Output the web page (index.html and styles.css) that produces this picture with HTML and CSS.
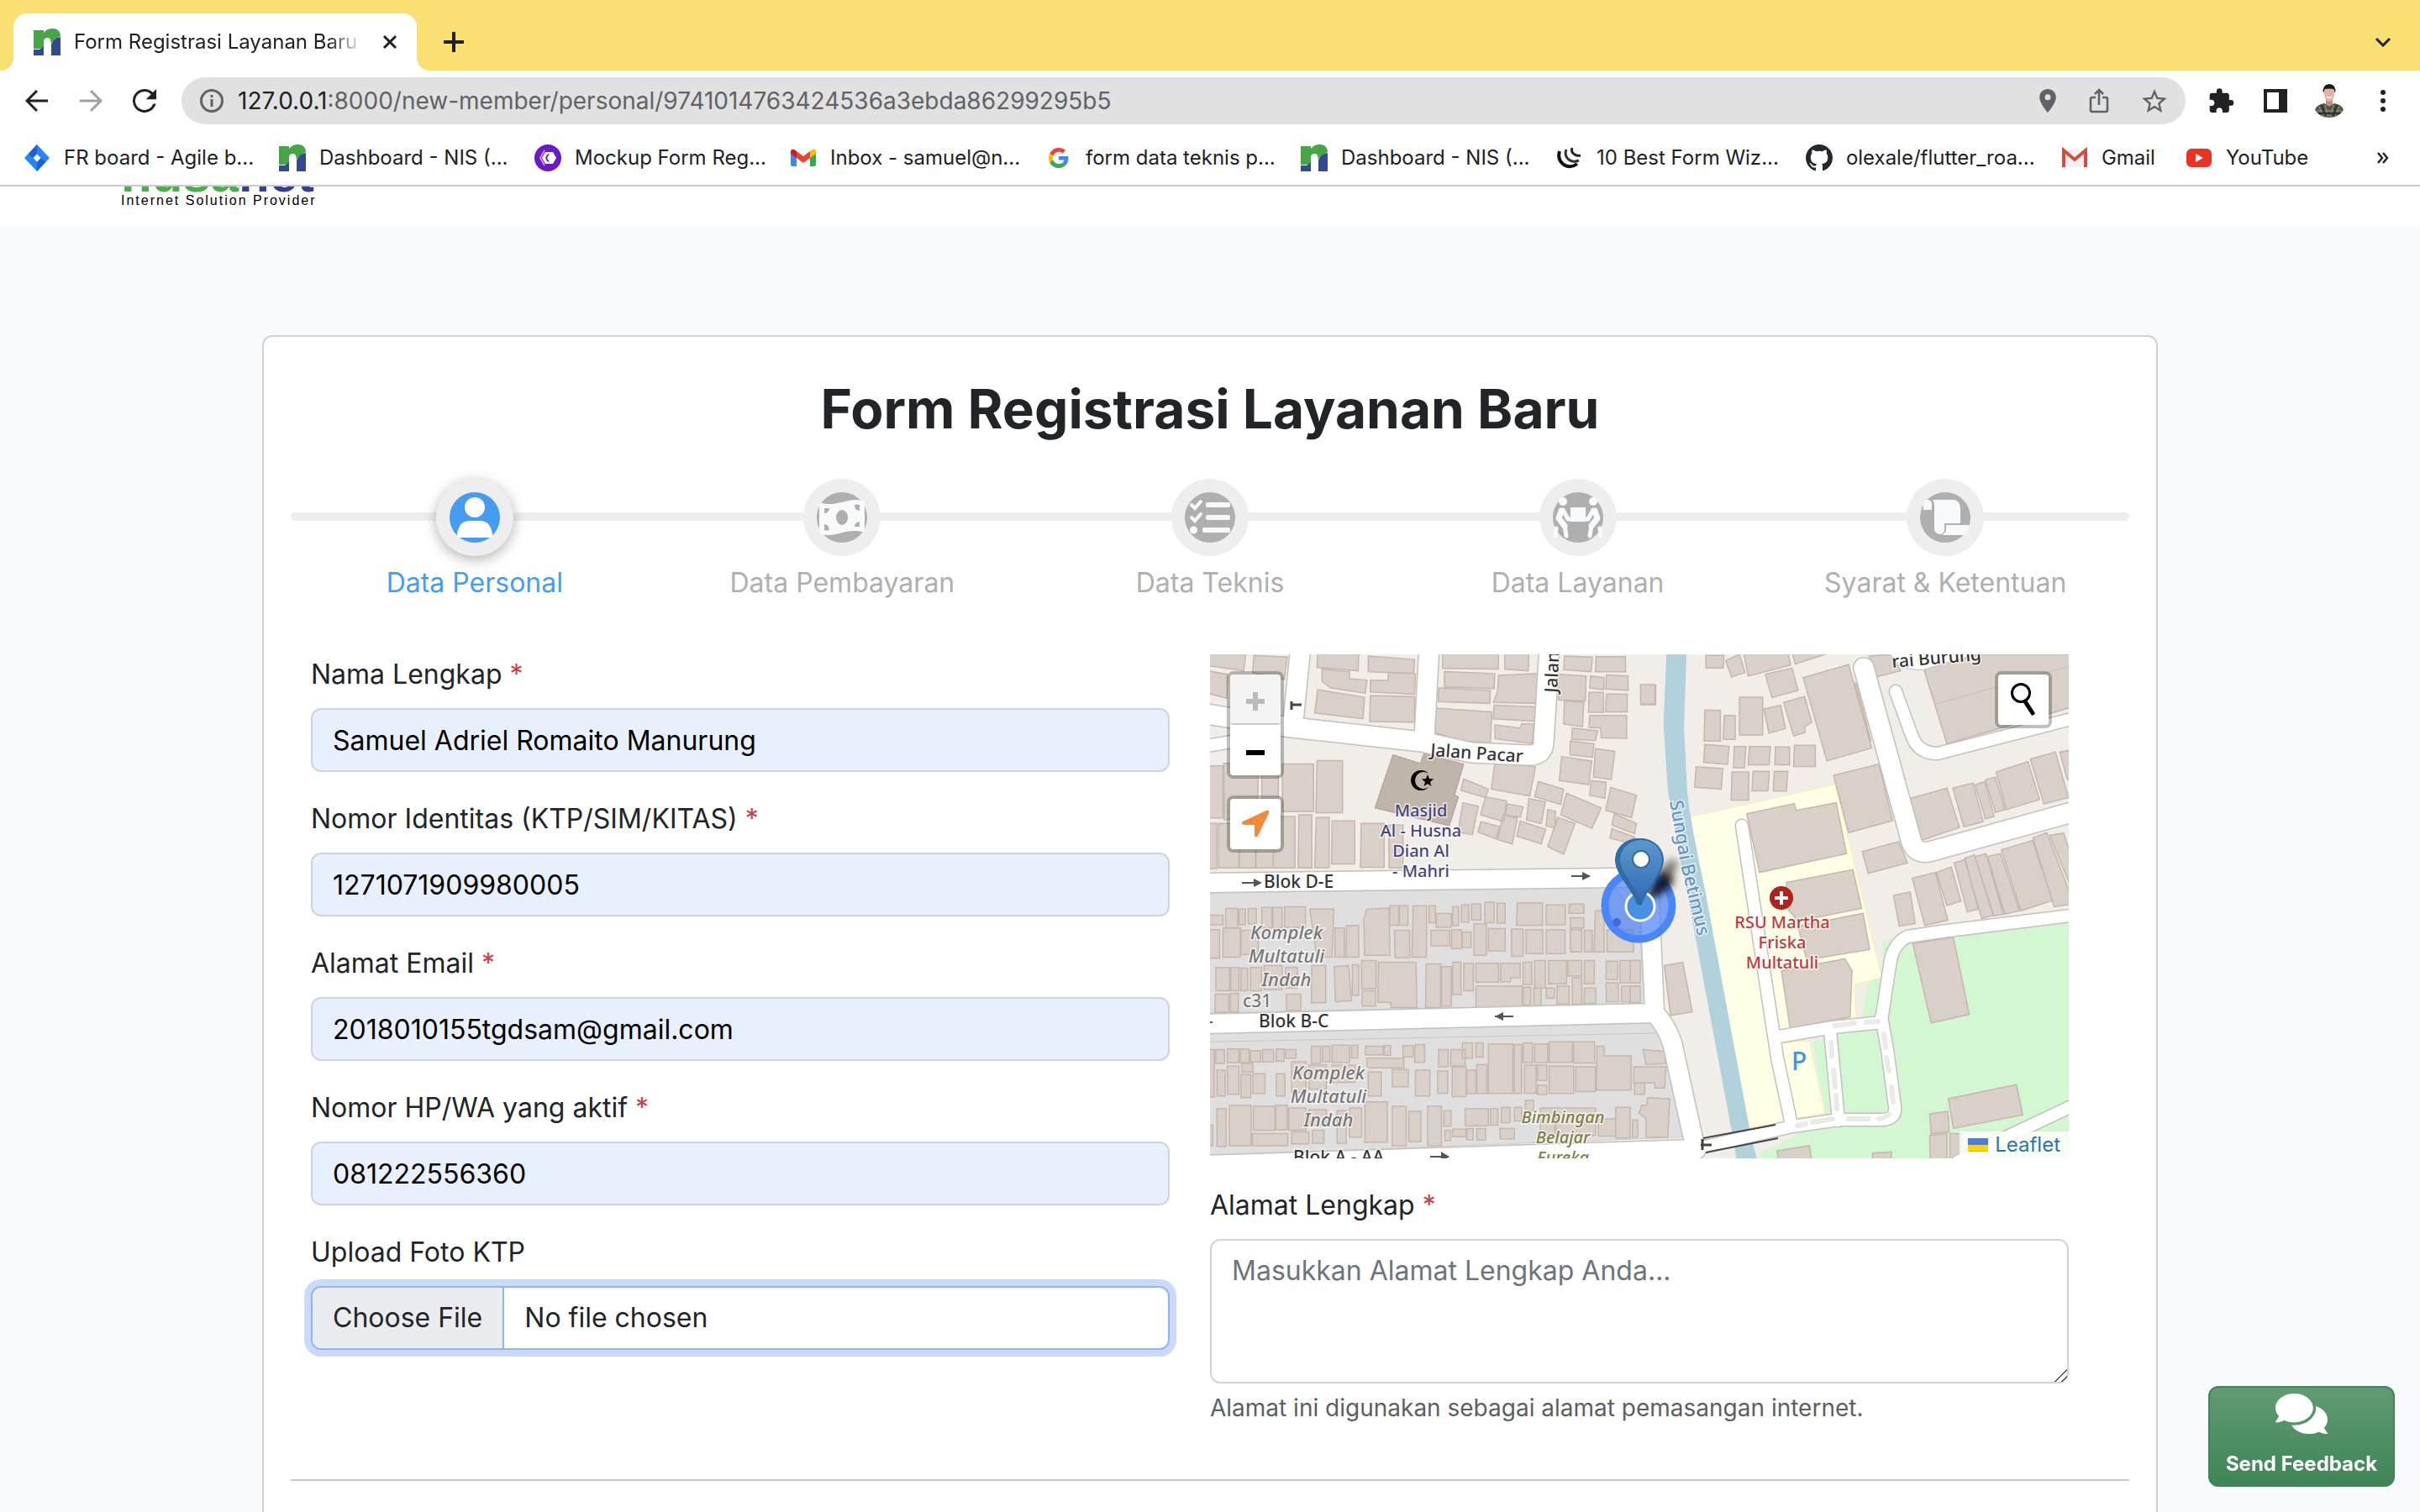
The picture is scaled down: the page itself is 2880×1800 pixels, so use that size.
FILE: index.html
```html
<!DOCTYPE html>
<html lang="id">
<head>
<meta charset="utf-8">
<title>Form Registrasi Layanan Baru</title>
<link rel="stylesheet" href="styles.css">
</head>
<body>
<svg class="defs" aria-hidden="true">
  <symbol id="nis" viewBox="0 0 32 32">
    <path fill="#48a546" d="M0 2h12v3c3-4 7-5 11-5 6 0 9 4 9 9l-8 5c-2 1-3 3-3 5l-1-6c-1-3-8-3-8 2v7L8 24H0z"/>
    <path fill="#334a90" d="M0 25h7l5-4v11H0zM21 32V19c2-6 6-8 11-9v22z"/>
  </symbol>
</svg>
<div class="browser">
  <header class="tabstrip">
    <div class="tab">
      <svg class="fav" viewBox="0 0 32 32"><use href="#nis"/></svg>
      <span class="tab-title">Form Registrasi Layanan Baru -</span>
      <button class="icon-btn" aria-label="Close tab"><svg width="18" height="18" viewBox="0 0 18 18"><path d="M2 2l14 14M16 2L2 16" stroke="#202124" stroke-width="3" fill="none"/></svg></button>
    </div>
    <button class="icon-btn new-tab" aria-label="New tab"><svg width="24" height="24" viewBox="0 0 24 24"><path d="M12 1v22M1 12h22" stroke="#202124" stroke-width="4" stroke-linecap="round"/></svg></button>
    <button class="icon-btn tab-search" aria-label="Search tabs"><svg width="20" height="12" viewBox="0 0 20 12"><path d="M2 2l8 8 8-8" stroke="#202124" stroke-width="3" fill="none"/></svg></button>
  </header>
  <nav class="toolbar">
    <button class="icon-btn" aria-label="Back"><svg width="28" height="28" viewBox="0 0 28 28"><path d="M27 14H3M14 2L2 14l12 12" stroke="#202124" stroke-width="3" fill="none"/></svg></button>
    <button class="icon-btn" aria-label="Forward"><svg width="28" height="28" viewBox="0 0 28 28"><path d="M1 14h24M14 2l12 12-12 12" stroke="#a0a1a3" stroke-width="3" fill="none"/></svg></button>
    <button class="icon-btn" aria-label="Reload"><svg width="28" height="28" viewBox="4 4 16 16"><path fill="#202124" d="M17.650 6.350A7.960 7.960 0 0 0 12 4a8 8 0 1 0 7.730 10h-1.800A6.300 6.300 0 1 1 12 5.700c1.730 0 3.300.7 4.450 1.850L13 11h7V4z"/></svg></button>
    <div class="omnibox">
      <svg width="28" height="28" viewBox="0 0 28 28"><circle cx="14" cy="14" r="12.500" fill="none" stroke="#5f6368" stroke-width="3"/><path d="M14 12v9M14 7v3" stroke="#5f6368" stroke-width="3"/></svg>
      <span class="url">127.0.0.1<span class="url-path">:8000/new-member/personal/9741014763424536a3ebda86299295b5</span></span>
      <div class="omni-icons">
        <svg width="20" height="28" viewBox="5 2 14 20"><path fill="#5f6368" d="M12 2C8.130 2 5 5.130 5 9c0 5.250 7 13 7 13s7-7.750 7-13c0-3.870-3.130-7-7-7zm0 9.500a2.500 2.500 0 1 1 0-5 2.500 2.500 0 0 1 0 5z"/></svg>
        <svg width="24" height="30" viewBox="0 0 24 30"><path d="M8 11H4q-2 0-2 2v13q0 2 2 2h16q2 0 2-2V13q0-2-2-2h-4M12 20V3M7 7l5-5 5 5" stroke="#5f6368" stroke-width="2.600" fill="none"/></svg>
        <svg width="30" height="28" viewBox="2 2 20 19"><path fill="#5f6368" d="M22 9.240l-7.190-.62L12 2 9.190 8.630 2 9.240l5.460 4.730L5.820 21 12 17.270 18.180 21l-1.630-7.030zM12 15.400l-3.760 2.270 1-4.280-3.320-2.880 4.380-.38L12 6.100l1.710 4.040 4.380.38-3.320 2.880 1 4.280z"/></svg>
      </div>
    </div>
    <button class="icon-btn" aria-label="Extensions"><svg width="30" height="30" viewBox="1.500 1 22 21.500"><path fill="#202124" d="M20.500 11H19V7c0-1.100-.9-2-2-2h-4V3.500a2.500 2.500 0 0 0-5 0V5H4c-1.100 0-2 .9-2 2v3.800h1.500c1.500 0 2.700 1.200 2.700 2.700S5 16.200 3.500 16.200H2V20c0 1.100.9 2 2 2h3.800v-1.500c0-1.500 1.200-2.700 2.700-2.700s2.700 1.200 2.700 2.700V22H17c1.100 0 2-.9 2-2v-4h1.500a2.500 2.500 0 0 0 0-5z"/></svg></button>
    <button class="icon-btn" aria-label="Side panel"><svg width="28" height="28" viewBox="0 0 28 28"><path fill="#202124" fill-rule="evenodd" d="M0 0h28v28H0zM4 4v20h14V4z"/></svg></button>
    <button class="icon-btn" aria-label="Profile"><svg width="34" height="40" viewBox="0 0 34 40"><path fill="#55564e" d="M0 31q1-6 11-8l6 3 6-3q10 2 11 8-6 9-17 9T0 31z"/><path d="M5 27l5 11M12 25l4 14M22 25l-4 14M29 27l-5 11M2 32h30" stroke="#a39c62" stroke-width="1" fill="none"/><path d="M8 25l4 12M26 25l-4 13M4 35h26" stroke="#2c2f43" stroke-width="2" fill="none"/><path fill="#c98e7b" d="M13 17h8v7l-4 3-4-3z"/><ellipse cx="17" cy="12" rx="6" ry="9" fill="#e2b3a2"/><path fill="#1c191b" d="M10 11Q8 1 17 0q9 1 7 11l-2-5q-5-1-10 0z"/><path d="M14 15q3 3 6 0" stroke="#fff" stroke-width="1.500" fill="none"/></svg></button>
    <button class="icon-btn" aria-label="Menu"><svg width="6" height="28" viewBox="0 0 6 28"><g fill="#202124"><circle cx="3" cy="4" r="3"/><circle cx="3" cy="14" r="3"/><circle cx="3" cy="24" r="3"/></g></svg></button>
  </nav>
  <nav class="bookmarks">
    <a href="#" class="bm"><svg class="fav" viewBox="0 0 32 32"><path fill="#2684ff" d="M16 0l15 16-15 16L1 16z"/><path fill="#1f5fd0" d="M16 0v10l-5 6-5-5zM16 32V22l5-6 5 5z"/><path fill="#fff" d="M16 11.500l4.500 4.500-4.500 4.500-4.500-4.500z"/></svg>FR board - Agile b...</a>
    <a href="#" class="bm"><svg class="fav" viewBox="0 0 32 32"><use href="#nis"/></svg>Dashboard - NIS (...</a>
    <a href="#" class="bm"><svg class="fav" viewBox="0 0 32 32"><circle cx="16" cy="16" r="16" fill="#6a1bc4"/><path fill="#fff" d="M13 9h9l4 7-4 7h-9l-4-7z"/><path d="M12 7l-5 9 5 9" stroke="#d9c2f3" stroke-width="1.500" fill="none"/><path fill="#6a1bc4" d="M15 12l3-1-3 5 3 5-3-1-2-4z"/></svg>Mockup Form Reg...</a>
    <a href="#" class="bm"><svg class="fav" viewBox="0 0 32 32"><path fill="#4285f4" d="M1 8v16q0 2 2 2h5V13z"/><path fill="#34a853" d="M31 8v16q0 2-2 2h-5V13z"/><path fill="#ea4335" d="M8 8l8 6 8-6v8l-8 6-8-6z"/><path fill="#c5221f" d="M1 9q0-4 4-3l3 2v8l-7-5z"/><path fill="#fbbc04" d="M31 9q0-4-4-3l-3 2v8l7-5z"/></svg>Inbox - samuel@n...</a>
    <a href="#" class="bm"><svg class="fav" viewBox="-8 -8 64 64"><path fill="#EA4335" d="M24 9.500c3.540 0 6.710 1.220 9.210 3.600l6.850-6.850C35.900 2.380 30.470 0 24 0 14.620 0 6.510 5.380 2.560 13.220l7.980 6.190C12.430 13.720 17.740 9.500 24 9.500z"/><path fill="#4285F4" d="M46.980 24.550c0-1.570-.15-3.090-.38-4.550H24v9.020h12.940c-.58 2.960-2.260 5.480-4.780 7.180l7.730 6c4.510-4.180 7.090-10.360 7.090-17.650z"/><path fill="#FBBC05" d="M10.530 28.590c-.48-1.450-.76-2.990-.76-4.590s.27-3.140.76-4.590l-7.980-6.190C.92 16.460 0 20.120 0 24s.92 7.540 2.560 10.780z"/><path fill="#34A853" d="M24 48c6.480 0 11.930-2.130 15.890-5.810l-7.730-6c-2.150 1.450-4.920 2.300-8.160 2.300-6.260 0-11.570-4.220-13.470-9.910l-7.980 6.190C6.510 42.620 14.620 48 24 48z"/></svg>form data teknis p...</a>
    <a href="#" class="bm"><svg class="fav" viewBox="0 0 32 32"><use href="#nis"/></svg>Dashboard - NIS (...</a>
    <a href="#" class="bm bm-auto"><svg class="fav" viewBox="0 0 32 32"><path fill="none" stroke="#111" stroke-width="4" d="M4 8q-3 10 5 16 8 5 16-1"/><path fill="none" stroke="#333" stroke-width="3" d="M12 6q-3 7 3 12 5 4 12 1"/><path fill="none" stroke="#222" stroke-width="3" d="M19 4q-2 5 3 8 3 2 7 1"/></svg>10 Best Form Wiz...</a>
    <a href="#" class="bm"><svg class="fav" viewBox="0 0 16 16"><path fill="#24292f" d="M8 0C3.580 0 0 3.580 0 8c0 3.540 2.290 6.530 5.470 7.590.4.070.55-.17.55-.38 0-.19-.01-.82-.01-1.490-2.010.37-2.530-.49-2.690-.94-.09-.23-.48-.94-.82-1.130-.28-.15-.68-.52-.01-.53.63-.01 1.080.58 1.230.82.72 1.210 1.870.87 2.330.66.070-.52.28-.87.51-1.070-1.780-.2-3.640-.89-3.640-3.950 0-.87.31-1.590.82-2.150-.08-.2-.36-1.020.08-2.120 0 0 .67-.21 2.200.82.64-.18 1.320-.27 2-.27s1.360.09 2 .27c1.530-1.040 2.200-.82 2.200-.82.44 1.100.16 1.920.08 2.120.51.56.82 1.270.82 2.150 0 3.070-1.870 3.750-3.650 3.950.29.25.54.73.54 1.480 0 1.070-.01 1.930-.01 2.200 0 .21.15.46.55.38A8.010 8.010 0 0 0 16 8c0-4.420-3.580-8-8-8z"/></svg>olexale/flutter_roa...</a>
    <a href="#" class="bm bm-short"><svg class="fav" viewBox="0 0 32 32"><path fill="#f1f1f1" d="M1 6h30v21H1z"/><path fill="none" stroke="#d54b3d" stroke-width="4" d="M3 27V7l13 11L29 7v20"/></svg>Gmail</a>
    <a href="#" class="bm bm-auto"><svg class="fav" viewBox="0 0 32 32"><rect x="1" y="5" width="30" height="22" rx="6" fill="#ea3323"/><path fill="#fff" d="M12 11l9 5-9 5z"/></svg>YouTube</a>
    <button class="icon-btn bm-more" aria-label="More bookmarks"><svg width="14" height="14" viewBox="0 0 14 14"><path d="M1 1l5 6-5 6M7 1l5 6-5 6" stroke="#202124" stroke-width="2.400" fill="none"/></svg></button>
  </nav>
  <div class="viewport">
    <div class="site-header">
      <div class="logo">
        <div class="logo-name"><span class="logo-green">nusa</span><span class="logo-blue">net</span></div>
        <div class="logo-tag">Internet Solution Provider</div>
      </div>
    </div>
    <main class="page">
      <form class="card">
        <h1>Form Registrasi Layanan Baru</h1>
        <ol class="steps">
          <li class="step active"><span class="dot"><svg width="60" height="60" viewBox="-30 -30 60 60"><circle r="30" fill="#469cf1"/><circle cy="-12" r="12" fill="#fff"/><path fill="#fff" d="M-21 24v-4Q-19 4-6 4H6Q19 4 21 20v4z"/></svg></span>Data Personal</li>
          <li class="step"><span class="dot"><svg width="60" height="60" viewBox="-30 -30 60 60"><circle r="30" fill="#afafaf"/><path fill="#f8f9fb" d="M-27-14q0-3 3-3C-9-13 4-21 17-21q6 0 10 2v33q0 3-3 3C9 13-4 21-17 21q-6 0-10-2z"/><g fill="#afafaf"><ellipse rx="7" ry="9"/><path d="M-21-11h6q-1 6-6 6zM15-15q3-1 6 0v7q-6 0-6-7zM-21 8q6 1 6 7-3 1-6 0zM21 5v6h-6q0-5 6-6z"/></g></svg></span>Data Pembayaran</li>
          <li class="step"><span class="dot"><svg width="60" height="60" viewBox="-30 -30 60 60"><circle r="30" fill="#afafaf"/><g stroke="#f8f9fb" fill="none" stroke-width="4" stroke-linecap="round"><path d="M-22-15l4 4 7-8M-22 0l4 4 7-8"/></g><g fill="#f8f9fb"><rect x="-5" y="-18" width="29" height="6" rx="2"/><rect x="-5" y="-3" width="29" height="6" rx="2"/><rect x="-9" y="12" width="33" height="6" rx="2"/><circle cx="-19.500" cy="15" r="4.500"/></g></svg></span>Data Teknis</li>
          <li class="step"><span class="dot"><svg width="60" height="60" viewBox="-30 -30 60 60"><circle r="30" fill="#afafaf"/><g fill="#f8f9fb"><circle cx="-18" cy="-19" r="5"/><circle cx="18" cy="-19" r="5"/><path d="M-9-12H9V5H-9z"/></g><g fill="none" stroke="#f8f9fb" stroke-linecap="round" stroke-linejoin="round"><path stroke-width="7" d="M-20-8l-3 9 7 9M20-8l3 9-7 9"/><path stroke-width="5" d="M-18-9l6 11h6M18-9L12 2H6M-16 9l2 13M16 9l-2 13M-26 13l-1 9M26 13l1 9"/></g></svg></span>Data Layanan</li>
          <li class="step"><span class="dot"><svg width="60" height="60" viewBox="-30 -30 60 60"><circle r="30" fill="#afafaf"/><g fill="#f8f9fb"><path d="M-26-15q0-6 5-6t5 6v6h-10zM-15-21H9q8 0 9 9V7H-1v8q-1 5-5 5-7-1-7-7v-27q0-4-2-7zM1 9h27q0 12-8 12H-4q5-3 5-7z"/></g></svg></span>Syarat &amp; Ketentuan</li>
        </ol>
        <div class="fields">
          <div class="col">
            <div class="field"><label for="nama">Nama Lengkap <span class="req">*</span></label><input id="nama" class="control filled" type="text" value="Samuel Adriel Romaito Manurung"></div>
            <div class="field"><label for="ktp">Nomor Identitas (KTP/SIM/KITAS) <span class="req">*</span></label><input id="ktp" class="control filled" type="text" value="1271071909980005"></div>
            <div class="field"><label for="email">Alamat Email <span class="req">*</span></label><input id="email" class="control filled" type="email" value="2018010155tgdsam@gmail.com"></div>
            <div class="field"><label for="hp">Nomor HP/WA yang aktif <span class="req">*</span></label><input id="hp" class="control filled" type="tel" value="081222556360"></div>
            <div class="field"><label for="foto">Upload Foto KTP</label><input id="foto" class="control file" type="file"></div>
          </div>
          <div class="col">
            <div class="map">
              <svg class="map-canvas" viewBox="0 0 1022 600" preserveAspectRatio="xMidYMid slice" role="img" aria-label="Peta lokasi">
                <defs>
                  <linearGradient id="pin" x1="0" y1="0" x2="0" y2="1"><stop offset="0" stop-color="#5d98cc"/><stop offset="1" stop-color="#2f69b4"/></linearGradient>
                  <filter id="soft" x="-50%" y="-50%" width="200%" height="200%"><feGaussianBlur stdDeviation="5"/></filter>
                  <path id="marker" d="M0 78C-3 62-26 42-26 25a26 25 0 0 1 52 0C26 42 3 62 0 78z"/>
                  <path id="river-line" d="M547 175L560 250 584 350"/>
                  <g id="roads">
                    <path class="w24" d="M-10 70L89 86 252 104 311 117 380 120Q396 120 397 106L404-10M108-10L99 80M261-10L255 100"/>
                    <path class="w14" d="M-10 110L60 98"/>
                    <path class="w22" d="M-10 272L483 266 512 266Q522 266 523 290L529 425M-10 440L529 427Q542 440 550 462L578 590M-10 608L578 589"/>
                    <path class="w24" d="M778 16L834 220Q838 238 856 235L1040 184"/>
                    <path class="w14" d="M816 44L835 96Q842 118 866 118L1040 73M633 204L675 480 692 560M677 455L741 444 800 438M738 448L748 555M799 432L806 470 815 538Q817 552 802 554L748 554 693 562 590 586M799 436L809 370Q812 345 830 336L870 330 1040 309M1040 531L930 583 890 604"/>
                  </g>
                </defs>
                <rect width="1022" height="600" fill="#f1eee9"/>
                <g transform="scale(.34436 .40816) translate(-58 -47)">
                  <path fill="#dfdfdf" stroke="#cfcdcd" vector-effect="non-scaling-stroke" d="M50 743L1460 725 1540 830 1562 1065 50 1093zM50 1152L1590 1122 1640 1180 1690 1455 50 1508z"/>
                  <path fill="none" stroke="#c8c6c6" vector-effect="non-scaling-stroke" d="M58 1177L1600 1152"/>
                  <path class="bld" d="M50 40H182L175 95 50 80zM50 95L118 105 115 175 50 160zM210 50L325 55 315 120 205 100zM430 40H572L570 95 428 85zM445 90L540 98V118L600 122 595 160 475 145 445 125zM430 150L592 172 587 235 420 218zM605 52L765 62 762 102 605 98zM612 123H673L675 100 768 103 765 163 612 157zM612 167L765 170V245L610 243zM862 40H1055V90L862 88zM1077 40H1160L1158 95 1077 90zM868 97L1042 103 1040 147 868 142zM1055 108L1190 103V190L1037 187 1052 155zM848 145L1027 152 1025 190 847 185zM837 204L1032 215 1027 305 925 300 835 275zM1040 195L1183 200 1180 242 1037 235zM1043 253L1130 262 1135 250H1178L1172 307 1043 293z"/>
                  <path class="bld" d="M1283 52L1380 55 1375 98 1280 92zM1392 54h102v44h-104zM1262 105L1358 110 1355 183 1262 180zM1373 110L1420 115 1418 150 1370 145zM1428 107L1503 110V152L1425 148zM1368 158h50v58h-52zM1428 163h72v52h-75zM1283 183L1350 187 1345 258 1280 250zM1370 225H1498V292L1410 290 1408 262 1368 260zM1310 262L1398 270 1390 298 1308 295zM1303 300L1385 308 1380 347 1302 340zM1390 322L1457 330 1445 412 1383 405zM1273 345L1377 358 1367 427 1265 415zM1375 415L1427 420 1423 467 1370 458zM1043 360L1183 375 1163 460 1030 440zM935 410L1020 440 1010 465 925 443zM1193 418L1280 440 1270 485 1180 462zM932 480L985 490 965 573 915 565zM1010 462L1083 475 1073 535 993 515zM1085 483L1140 492 1130 522 1078 515zM995 535L1060 550 1047 585 983 565zM1070 515L1120 525 1103 600 1052 587zM1160 468L1217 477 1203 540 1152 530zM1130 533L1218 557 1203 600 1118 577zM1225 500L1252 505 1250 553 1220 548zM1290 452L1410 495 1378 555 1270 515zM1260 523L1320 540 1280 630 1225 608zM1443 435L1532 458 1515 523 1425 502zM1455 512L1532 540 1525 570 1447 545zM1447 555L1525 580 1518 600 1440 583zM1548 137h50v57h-50z"/>
                  <path class="bld" d="M50 372h53v152h-53zM105 365L225 368 222 520 108 530zM237 370h57v140h-57zM308 367h108v138h-108zM428 357h88v152h-92zM50 540h32v132h-32zM88 540h70v130h-70zM160 535h55v135h-55zM217 600h60v70h-60zM280 520h72v150h-76zM365 515h45v155h-48zM425 522h45v147h-50zM480 533h78v125h-80zM580 540h80v128h-82zM675 545h50v125h-48z"/>
                  <path fill="#c0b5aa" stroke="#ac9d8e" vector-effect="non-scaling-stroke" d="M690 340L785 365 797 337 935 367 903 458 917 462 885 547 628 495z"/>
                  <path class="bld" d="M50 808h53v28h-53zM112 788h42v58h-42zM158 790h22v45h-22zM190 788h28v45h-28zM237 785h35v60h-35zM275 785h32v60h-32zM316 783h72v60h-72zM403 790h83l-6 140h-53zM50 850h41v83h-41zM103 845h60v85h-60zM165 852h60v70h-60zM490 845h33v85h-33zM530 838h42v92h-44zM600 790L677 787 680 925 592 925 590 820zM680 780h30v57h-32zM712 780h30v57h-30zM695 852h53v80h-50zM760 780h46v150h-50zM815 780h22v50h-22zM840 803h52v40h-52zM897 783h20v55h-20zM927 778h25v50h-25zM962 775h32v47h-32zM1008 770h32v60h-32zM1050 773h28v58h-28zM822 852h65v45h-65zM893 850h35v55h-35zM930 857h30v45h-30zM970 833h43v92h-43zM1020 847h58v65h-58zM1120 772h87v65h-90zM1220 778h66v58h-66zM1300 775h50v27h-52zM1303 815h47v30h-47zM1100 848h40v80h-40zM1150 850h58v70h-58zM1220 850h65v70h-65zM1303 850h40v65h-40zM1352 852h27v63h-27zM1390 795h30v120h-35zM1430 850h92v65h-92z"/>
                  <path class="bld" d="M78 960h48v68h-48zM130 960h28v68h-28zM165 962h23v66h-23zM198 960h38v68h-38zM245 955h62v70h-62zM320 960h40v60h-40zM410 955h48v108h-50zM487 958L537 955 547 1057 492 1060zM550 952h22v90h-22zM582 940h50v82h-50zM584 1028h46v45h-46zM640 945h130l3 132h-90v-15h-45zM805 950h50v127h-52zM858 958h34v115h-34zM897 945h28v95h-28zM935 948h33v80h-33zM977 948h78v55h-78zM1062 948h68v42h-33v12h-35zM1140 945h30v65h-30zM1180 940h37v80h-37zM1228 940h62v68h-62zM1295 940h48v45h-48zM1352 940h34v68h-34zM1427 942h40v53h-40zM1475 940h68v65h-68zM977 1015h160v62h-160zM1140 1018h26v52h-26zM1177 1020h25v52h-25zM1220 1020h28v30h-28zM1257 1015h42v52h-42zM1310 990h33v78h-33zM1352 1020h40v45h-42zM1427 1005h42v55h-42zM1480 1015h63v45h-63zM76 1038h47v52h-47zM128 1036h28v54h-28zM322 1038h50v47h-50z"/>
                  <path class="bld" d="M50 1200h23v138h-23zM78 1200h30v40h-30zM118 1198h40v40h-40zM163 1198h30v40h-30zM198 1203h35v33h-35zM240 1200h38v36h-38zM287 1198h27v36h-27zM320 1200h35v25h-35zM408 1190h32v50h-32zM447 1190h25v45h-25zM480 1187h60v50h-60zM547 1187h22v37h-22zM595 1190h62v25h-62zM660 1188h22v28h-22zM725 1188h35v33h-35zM767 1185h33v52h-35zM600 1225h128v28h-128zM82 1260h28v75h-28zM118 1248h40v82h-40zM168 1240h38v25h-38zM165 1272h34v68h-34zM206 1270h42v58h-42zM287 1270h30v65h-30zM340 1235h50v90h-50zM400 1245h60v70h-60zM480 1245h80v50h-80zM605 1265h45v70h-45zM688 1258h55v50h-55zM768 1260h50v75h-50zM848 1200h33v50h-33zM845 1262h35v65h-35zM890 1200h50v48h-50zM930 1180h35v45h-35zM977 1180h25v42h-25zM895 1250h48v87h-48zM945 1260h32v68h-32zM980 1243h35v85h-35zM1020 1183h85v145h-85zM1110 1185h25v143h-25zM1140 1180h33v58h-33zM1180 1183h45v55h-45zM1230 1177h80v60h-80zM1315 1177h72v62h-72zM1145 1245h40v82h-40zM1190 1245h32v45h-32zM1190 1303h32v28h-32zM1230 1248h85v80h-85zM1322 1250h68v72h-68zM1395 1190h25v28h93v100h-120z"/>
                  <path class="bld" d="M50 1420h18v60h-18zM82 1372h32v110h-32zM125 1362h75v118h-75zM208 1365h75v70h-75zM285 1362h40v72h-40zM330 1370h60v65h-60zM205 1445h122v35h-122zM340 1440h60v35h-60zM412 1435h40v38h-40zM400 1375h60v45h-60zM497 1378h32v95h-32zM540 1370h42v85h-42zM593 1352h78v118h-78zM688 1365h48v115h-48zM745 1380h42v88h-42zM810 1365h48v115h-48zM866 1378h25v45h-25zM870 1435h20v30h-20zM940 1372h80v50h-80zM897 1432h45v22h-45zM945 1430h22v33h-22zM980 1430h30v33h-30zM1028 1372h25v48h-25zM1065 1368h30v45h-30zM1060 1430h50v30h-50zM1110 1368h25v40h-25zM1148 1348h28v30h-28zM1200 1370h50v90h-50zM1255 1370h135v80h-135zM1400 1402h60v50h-60zM1460 1368h50v90h-50z"/>
                </g>
                <g transform="translate(500 0) scale(.34436 .40816) translate(0 -47)">
                  <path fill="#d3f7d1" d="M1530 815L980 885 875 880 870 990 825 1000 800 1110 720 1160 630 1175 675 1390 560 1455 450 1500 455 1530H1530z"/>
                  <path fill="#ffffe5" stroke="#f9efb0" vector-effect="non-scaling-stroke" d="M205 522L708 426 870 990 775 1010 780 1110 550 1140 520 1180 620 1175 672 1385 575 1400 530 1410 412 1428 262 780z"/>
                  <path fill="#b1d1dc" d="M126 40L115 250 130 440Q150 540 205 780L345 1410 370 1530H440L410 1420 260 740Q200 500 197 440L186 260 195 40z"/>
                  <path class="bld" d="M36 135h50v57h-50zM262 50h62l-2 37h-60zM330 65L378 47 397 100 350 113zM392 40H545L555 78 408 110zM560 40H700L570 75zM467 105L560 87 580 152 490 173zM378 172h80v110h-80zM258 210h54v90h-56zM325 225h38v70h-41zM462 207L520 195 537 263 480 277zM530 187L603 170 628 245 603 258 605 275 565 285zM598 115L755 77 835 320 680 358zM775 130L783 135 832 300 828 300zM258 310L342 315 337 368 254 362zM360 316h40l-5 62h-38zM412 316h73l-5 53h-72zM502 317h49v52h-51zM568 312h72v62h-75zM228 375L320 380 315 440 223 435zM352 390h58v82h-61zM425 388h56l-5 57h-55zM498 388h47l-5 58h-45z"/>
                  <path class="bld" d="M403 512L568 482 573 502 712 480 748 628 447 683zM540 712L770 675 800 788 580 825 545 790zM580 840L805 802 828 908 610 938zM523 970L742 935 767 970 760 1105 553 1138zM703 400L860 367 907 532 755 567zM802 622L928 593 958 655 823 686zM825 52L900 47 935 95 850 113zM1015 90L1200 47H1530V200L1095 308zM965 468L1095 437 1138 552 1005 590zM1115 437L1185 422 1220 535 1153 550zM1192 427L1225 418 1258 520 1228 527zM1228 413L1262 405 1295 500 1262 508zM1265 390L1375 360 1415 470 1300 500zM1383 352L1470 332 1515 465 1430 483zM1485 332L1530 325V420L1510 410z"/>
                  <path class="bld" d="M975 700L1055 683 1098 822 1018 838zM1058 683L1110 667 1143 767 1095 780zM910 750L968 740 985 832 930 840zM1120 655L1158 645 1203 790 1165 798zM1155 642L1190 632 1255 808 1215 818zM1192 637L1230 628 1290 805 1255 810zM1235 637L1280 628 1345 795 1295 805zM1283 617L1390 590 1460 765 1350 795zM1392 582L1440 567 1530 765V775L1465 783zM1450 575L1498 568 1530 650V740zM118 955L182 945 215 1090 140 1100zM0 940h35v65H0zM0 1015h35v48H0zM45 1200L123 1205V1240L55 1243zM12 1250h112l-5 62H85v-15H12zM15 1298h35v32h-35zM60 1340L137 1343 130 1457 55 1455 55 1400 30 1385 40 1362 58 1362zM8 1405h18v50H8zM977 890L1117 872 1172 1097 1040 1122zM1100 1343L1335 1302 1357 1390 1117 1430zM1035 1387L1098 1380 1103 1440 1040 1445zM1035 1450L1095 1445V1530H1037zM1105 1445h40v85h-40zM508 1495L620 1480 628 1530H513zM838 1502L903 1498V1530H838z"/>
                  <path fill="none" stroke="#c9bcb1" vector-effect="non-scaling-stroke" d="M1057 192L1516 82"/>
                </g>
                <use href="#roads" class="road casing"/>
                <use href="#roads" class="road"/>
                <path d="M743 442l24-3M781 438l14-1M739 462l1 16M742 495l2 20M745 525l1 16M802 452l2 16M805 480l3 16M811 515l2 18M699 561l10-2M717 557l24-4M760 553l24 0M796 553q10-2 12-6" stroke="#ebeae8" stroke-width="6" stroke-linecap="round" fill="none"/>
                <path d="M587 576l86-16M590 593l86-17" stroke="#444" stroke-width="2"/>
                <path d="M586 577v13M584 584h13M97 66v-10M97 60h12" stroke="#444" stroke-width="3"/>
                <path d="M38 272h22M430 264h22M361 431h-22M0 438h3M262 598h22" stroke="#555" stroke-width="2"/>
                <path fill="#555" d="M52 267l10 5-10 5zM443 259l10 5-10 5zM349 426l-10 5 10 5zM275 592l10 6-10 6z"/>
                <path d="M806-4L820 12Q832 20 850 18L925-4z" fill="#fff" stroke="#c4c1bd"/>
                <g class="place">
                  <text x="262" y="121" transform="rotate(4 262 121)">Jalan Pacar</text>
                  <text transform="translate(413 46) rotate(-87)">Jalan</text>
                  <text x="64" y="278">Blok D-E</text>
                  <text x="58" y="444">Blok B-C</text>
                  <text x="99" y="606">Blok A - AA</text>
                  <text transform="translate(812 16) rotate(-5)">rai Burung</text>
                  <g class="mid navy"><text x="251" y="193">Masjid</text><text x="251" y="217">Al - Husna</text><text x="251" y="241">Dian Al</text><text x="251" y="265">- Mahri</text></g>
                  <g class="mid area"><text x="91" y="339">Komplek</text><text x="91" y="367">Multatuli</text><text x="91" y="395">Indah</text><text x="141" y="506">Komplek</text><text x="141" y="534">Multatuli</text><text x="141" y="562">Indah</text></g>
                  <text class="num" x="39" y="420">c31</text>
                  <g class="mid red"><text x="681" y="326">RSU Martha</text><text x="681" y="350">Friska</text><text x="681" y="374">Multatuli</text></g>
                  <g class="mid olive"><text x="420" y="558">Bimbingan</text><text x="420" y="582">Belajar</text><text x="420" y="606">Eureka</text></g>
                  <text class="river"><textPath href="#river-line">Sungai Betimus</textPath></text>
                  <text class="park" x="692" y="495">P</text>
                </g>
                <circle cx="680" cy="290" r="14" fill="#ae231c"/><path d="M680 282v16M672 290h16" stroke="#fff" stroke-width="4"/>
                <path d="M260 142a12 12 0 1 0 0 16 10 10 0 1 1 0-16z"/><path d="M259 143l2 5 5 .4-4 3.500 1.500 5-4.500-3-4.500 3 1.500-5-4-3.500 5-.4z"/>
                <path d="M530 262L546 246q14-6 8 10-6 20-28 32z" fill="#000" opacity=".5" filter="url(#soft)"/>
                <circle cx="510" cy="299" r="40" fill="#4a80f5" fill-opacity=".7" stroke="#4a86f5" stroke-width="9"/>
                <path d="M515 297L534 262q12-4 18 8-8 14-30 22z" fill="#000" opacity=".8" filter="url(#soft)"/>
                <circle cx="484" cy="319" r="5" fill="#4569d6"/>
                <circle cx="512" cy="300" r="17" fill="#4a90e2" stroke="#fff" stroke-width="3"/>
                <g fill="url(#pin)" stroke="#2e6ca1" stroke-width="2"><use href="#marker" x="509" y="220"/><use href="#marker" x="511" y="220"/><use href="#marker" x="513" y="220"/></g>
                <circle cx="513" cy="244" r="10" fill="#fff" stroke="#2e6ca1" stroke-width="2"/>
              </svg>
              <div class="map-left">
                <div class="map-ctl zoom"><button type="button" class="off" aria-label="Zoom in"><svg width="24" height="24" viewBox="0 0 24 24"><path d="M12 1v22M1 12h22" stroke="#bbb" stroke-width="6"/></svg></button><button type="button" aria-label="Zoom out"><svg width="24" height="24" viewBox="0 0 24 24"><path d="M1 12h22" stroke="#000" stroke-width="6"/></svg></button></div>
                <div class="map-ctl"><button type="button" aria-label="Lokasi saya"><svg width="34" height="34" viewBox="0 0 34 34"><path fill="#f08a3c" d="M30 1q4-1 3 3L20 31q-3 4-4-1V18H4q-5-1-2-4z"/></svg></button></div>
              </div>
              <div class="map-ctl map-search"><button type="button" aria-label="Cari"><svg width="30" height="40" viewBox="0 0 30 40"><circle cx="12" cy="12" r="10.500" fill="none" stroke="#000" stroke-width="3"/><path d="M17 22l9 14" stroke="#000" stroke-width="5" stroke-linecap="round"/></svg></button></div>
              <a href="#" class="leaflet"><svg width="24" height="16" viewBox="0 0 24 16"><path fill="#4c7be1" d="M0 0h24v8H0z"/><path fill="#ffd500" d="M0 8h24v7H0z"/><path fill="#e0bc00" d="M0 15h24v1H0z"/></svg>Leaflet</a>
            </div>
            <div class="field"><label for="alamat">Alamat Lengkap <span class="req">*</span></label><textarea id="alamat" class="control area-box" placeholder="Masukkan Alamat Lengkap Anda..."></textarea><p class="help">Alamat ini digunakan sebagai alamat pemasangan internet.</p></div>
          </div>
        </div>
        <hr>
      </form>
    </main>
  </div>
</div>
<button class="feedback" type="button"><svg width="62" height="50" viewBox="0 24 576 464"><path fill="#fff" d="M416 192c0-88.400-93.100-160-208-160S0 103.600 0 192c0 34.300 14.100 65.900 38 92-13.400 30.200-35.500 54.200-35.800 54.500-2.200 2.300-2.800 5.700-1.500 8.700S4.800 352 8 352c36.600 0 66.900-12.300 88.700-25 32.200 15.700 70.300 25 111.300 25 114.900 0 208-71.600 208-160zm122 220c23.900-26 38-57.700 38-92 0-66.900-53.500-124.200-129.300-148.100.9 6.600 1.300 13.300 1.300 20.100 0 105.900-107.700 192-240 192-10.800 0-21.300-.8-31.700-1.900C207.800 439.600 281.800 480 368 480c41 0 79.100-9.200 111.300-25 21.800 12.700 52.100 25 88.700 25 3.200 0 6.100-1.900 7.300-4.800 1.300-2.900.7-6.300-1.500-8.700-.3-.3-22.400-24.200-35.800-54.500z"/></svg>Send Feedback</button>
</body>
</html>
```
FILE: styles.css
```css
*{box-sizing:border-box}
body{margin:0;font-family:Inter,"Liberation Sans",sans-serif;color:#212529;font-size:32px;line-height:48px}
.defs{position:absolute;width:0;height:0}
.browser{height:100vh;display:flex;flex-direction:column}
.icon-btn{display:flex;align-items:center;justify-content:center;width:32px;height:32px;padding:0;border:0;background:none;flex:none}
.icon-btn svg{flex:none}
.fav{width:32px;height:32px;flex:none}

.tabstrip{flex:none;height:84px;background:#fadf73;display:flex;align-items:center;padding:16px 28px 0 16px}
.tab{position:relative;width:480px;height:68px;background:#fff;border-radius:16px 16px 0 0;display:flex;align-items:center;padding:0 16px 0 24px;gap:16px}
.tab::before,.tab::after{content:"";position:absolute;bottom:0;width:16px;height:16px}
.tab::before{left:-16px;background:radial-gradient(circle at 0 0,#fadf73 16px,#fff 16px)}
.tab::after{right:-16px;background:radial-gradient(circle at 100% 0,#fadf73 16px,#fff 16px)}
.tab-title{flex:1;font-size:24px;line-height:32px;white-space:nowrap;overflow:hidden;color:#202124;-webkit-mask-image:linear-gradient(90deg,#000 88%,transparent);mask-image:linear-gradient(90deg,#000 88%,transparent)}
.new-tab{margin-left:28px}
.tab-search{margin-left:auto}

.toolbar{flex:none;height:72px;display:flex;align-items:center;gap:32px;padding:0 28px}
.omnibox{flex:1;height:56px;border-radius:28px;background:#e1e1e1;display:flex;align-items:center;gap:17px;padding:0 22px;margin:0 -5px 0 -4px}
.url{font-size:28px;line-height:40px;color:#202124}
.url-path{color:#5f6368}
.omni-icons{margin-left:auto;display:flex;align-items:center;gap:39px}

.bookmarks{flex:none;height:66px;border-bottom:2px solid #cbcbcb;display:flex;align-items:center;gap:32px;padding:0 28px}
.bm{display:flex;align-items:center;gap:16px;width:272px;font-size:24px;line-height:32px;color:#202124;text-decoration:none;white-space:nowrap}
.bm-auto{width:auto}
.bm-short{width:116px}
.bm-more{margin-left:auto}

.viewport{flex:1;min-height:0;overflow:hidden;background:#f9fafb}
.site-header{height:49px;background:#fff;overflow:hidden;display:flex;align-items:flex-end;padding:0 144px 24px}
.logo-name{font:bold 60px/46px "Liberation Sans",Arial,sans-serif}
.logo-green{color:#4bae4a}
.logo-blue{color:#333f90}
.logo-tag{font:16px/16px "Liberation Sans",Arial,sans-serif;letter-spacing:2px;color:#000}

.page{padding:128px 312px 0}
.card{background:#fff;border:2px solid #cfd1d3;border-radius:12px;padding:48px 32px}
h1{margin:0 0 45px;font-size:64px;line-height:76px;font-weight:700;text-align:center}
.steps{position:relative;list-style:none;margin:0 0 61px;padding:0;display:grid;grid-template-columns:repeat(5,1fr)}
.steps::before{content:"";position:absolute;left:0;right:0;top:40px;height:10px;border-radius:5px;background:#eee}
.step{position:relative;display:flex;flex-direction:column;align-items:center;gap:8px;color:#afafaf}
.step.active{color:#469cf1}
.dot{width:92px;height:92px;border-radius:50%;background:#eee;display:flex;align-items:center;justify-content:center}
.active .dot{box-shadow:0 4px 16px rgba(0,0,0,.3)}

.fields{display:grid;grid-template-columns:1fr 1fr;gap:48px;padding:0 72px 0 24px}
.col{display:flex;flex-direction:column;gap:32px;min-width:0}
.field{display:flex;flex-direction:column}
.field label{margin-bottom:16px}
.req{color:#cd3f48}
.control{width:100%;height:76px;border:2px solid #ced4da;border-radius:12px;padding:12px 24px;font:inherit;color:#212529;background:#fff;outline:0}
.filled{background:#e8effd;color:#000}
.file{border-color:#8eb5f8;box-shadow:0 0 0 8px #cad9fc;overflow:hidden}
.file::file-selector-button{font:inherit;color:#212529;background:#ebecf0;border:0;border-right:2px solid #8eb5f8;padding:12px 24px;margin:-12px 24px -12px -24px}
.area-box{height:172px;display:block}
.area-box::placeholder{color:#6c757d}
.area-box::-webkit-resizer{background:linear-gradient(135deg,transparent 48%,#555 48% 56%,transparent 56% 74%,#555 74% 82%,transparent 82%)}
.help{margin:8px 0 0;font-size:28px;line-height:42px;color:#5b5f63}
hr{border:0;border-top:2px solid #c8c9ca;margin:64px 0 0;height:0}

.map{position:relative;height:600px;overflow:hidden}
.map-canvas{display:block;width:100%;height:100%}
.bld{fill:#d9d0ca;stroke:#c6b7aa;stroke-width:1.5px;vector-effect:non-scaling-stroke}
.road{--edge:0px;fill:none;stroke:#fff;stroke-linejoin:round;stroke-linecap:round}
.casing{--edge:3px;stroke:#c4c1bd}
.w24{stroke-width:calc(23px + var(--edge))}
.w22{stroke-width:calc(22px + var(--edge))}
.w14{stroke-width:calc(14px + var(--edge))}
.place{font:500 21px "Noto Sans",sans-serif;fill:#333;stroke:rgba(255,255,255,.7);stroke-width:3px;paint-order:stroke}
.mid{text-anchor:middle}
.navy{font-size:20px;fill:#45457c}
.area{font-size:22px;font-style:italic;fill:#777}
.red{font-size:20px;fill:#bf3a38}
.olive{font-size:20px;font-style:italic;fill:#7c7f43}
.num{fill:#777}
.river{font-size:22px;fill:#6595c0}
.park{font-size:30px;fill:#4295d6}
.map-left{position:absolute;left:20px;top:20px;display:flex;flex-direction:column;gap:20px}
.map-ctl{width:68px;border:4px solid rgba(0,0,0,.25);border-radius:8px;background-clip:padding-box}
.map-ctl button{width:60px;height:60px;border:0;padding:0;background:#fff;display:flex;align-items:center;justify-content:center;border-radius:4px}
.map-ctl.zoom button{padding-top:6px}
.map-ctl .off{background:#f4f4f4;border-bottom:2px solid #ccc}
.map-search{position:absolute;right:20px;top:20px}
.leaflet{position:absolute;right:0;bottom:0;display:flex;align-items:center;gap:8px;padding:0 10px;background:rgba(255,255,255,.8);font-size:24px;line-height:32px;color:#2f74a8;text-decoration:none}

.feedback{position:fixed;right:30px;bottom:30px;width:222px;height:120px;border:2px solid #3f8556;border-radius:12px;background:linear-gradient(#619b76,#3f8556);color:#fff;font:bold 24px/32px Inter,sans-serif;display:flex;flex-direction:column;align-items:center;justify-content:space-between;padding:6px 0 9px}
```
